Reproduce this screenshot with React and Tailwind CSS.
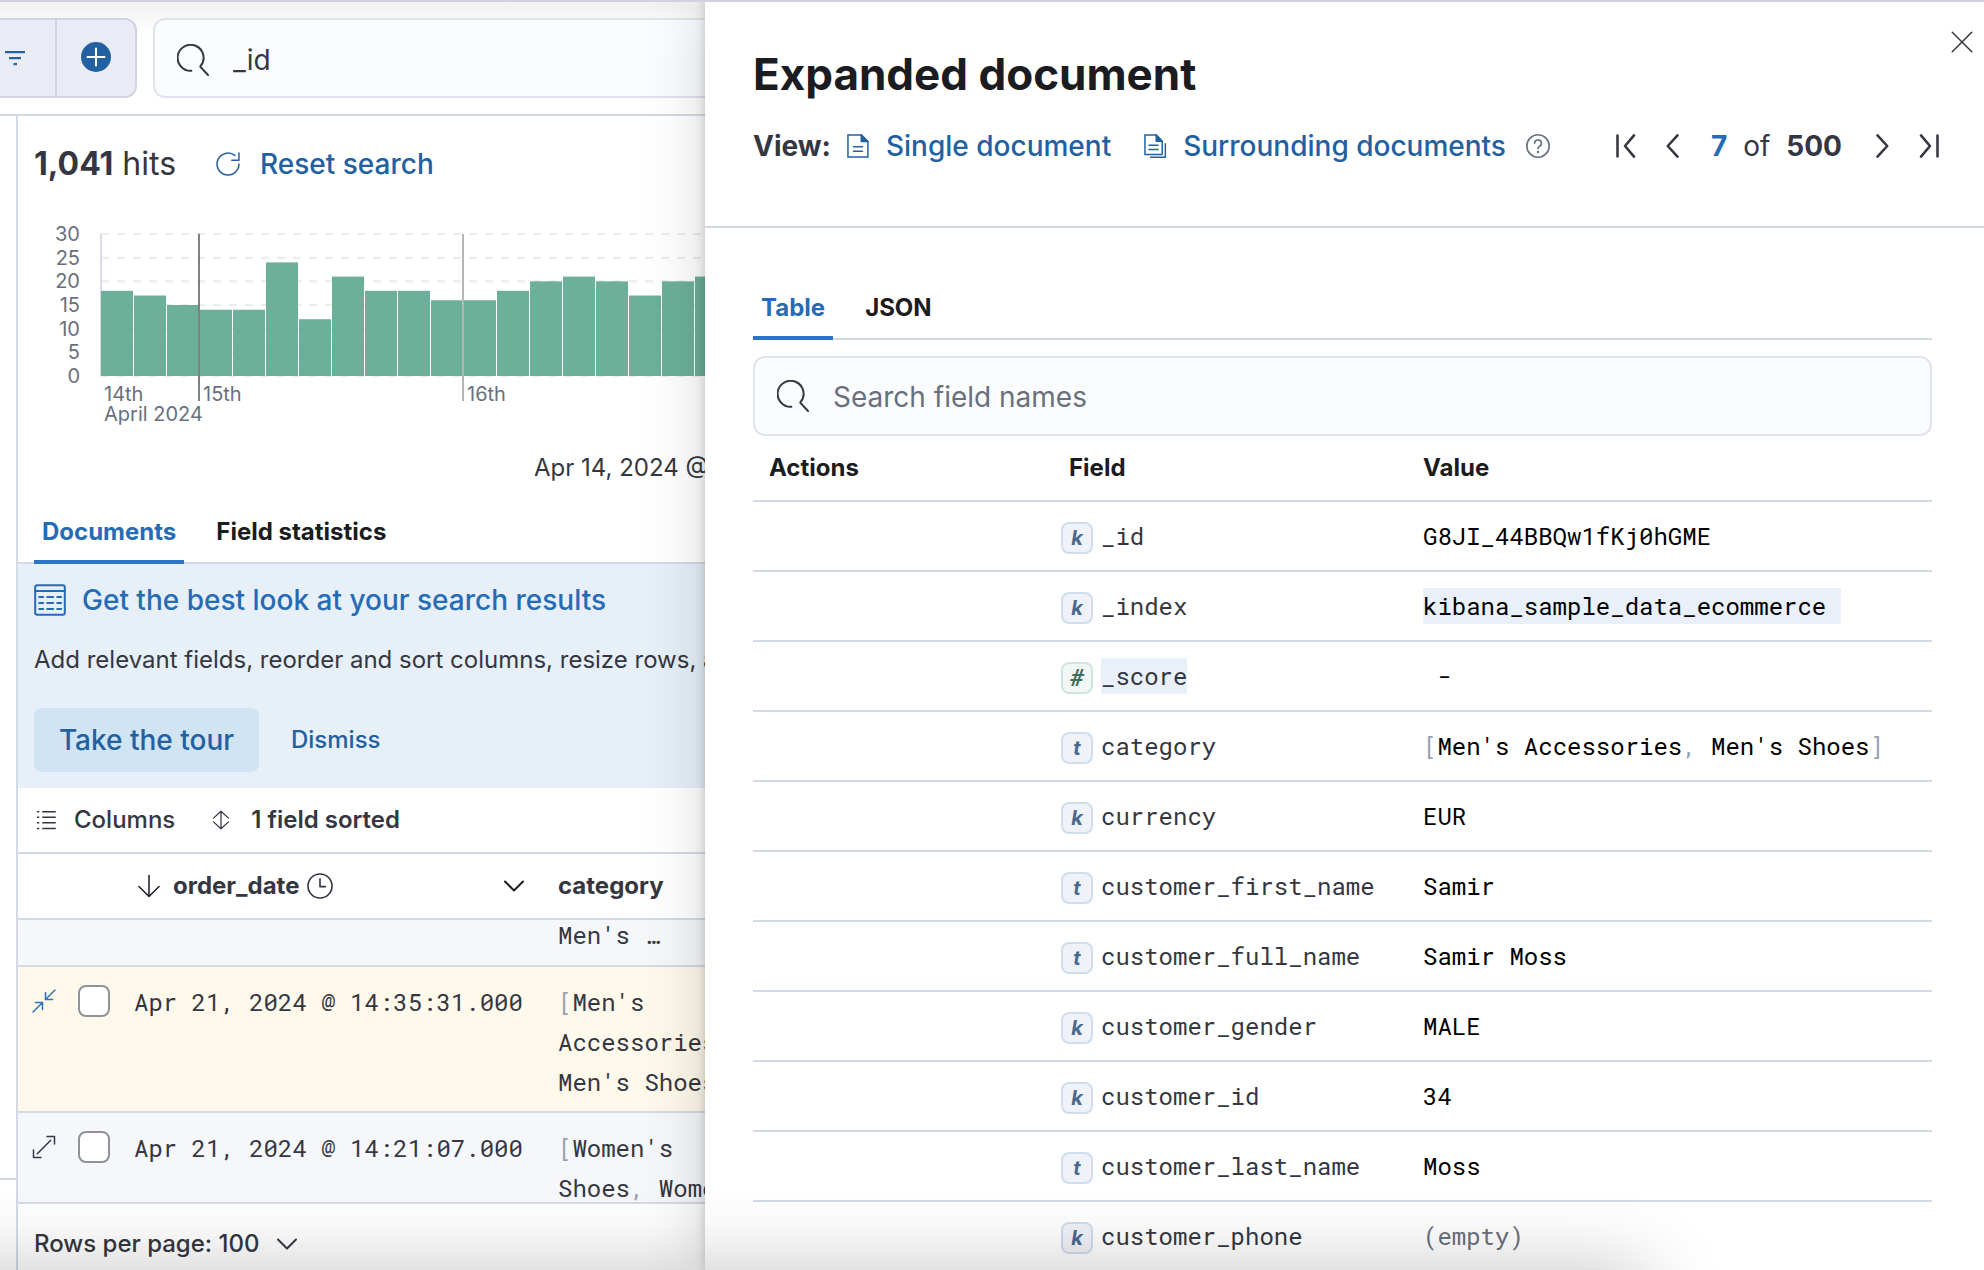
import React, { useState } from "react";
import clsx from "clsx";

const MONO = "font-['Roboto_Mono','Liberation_Mono',monospace]";

const BARS = [18, 17, 15, 14, 14, 24, 12, 21, 18, 18, 16, 16, 18, 20, 21, 20, 17, 20, 21, 19];
const TICKS = [30, 25, 20, 15, 10, 5, 0];

const FIELDS = [
  { type: "k", name: "_id", value: "G8JI_44BBQw1fKj0hGME" },
  { type: "k", name: "_index", value: "kibana_sample_data_ecommerce ", markValue: true },
  { type: "#", name: "_score", value: " -", markName: true },
  { type: "t", name: "category", value: ["Men's Accessories", "Men's Shoes"] },
  { type: "k", name: "currency", value: "EUR" },
  { type: "t", name: "customer_first_name", value: "Samir" },
  { type: "t", name: "customer_full_name", value: "Samir Moss" },
  { type: "k", name: "customer_gender", value: "MALE" },
  { type: "k", name: "customer_id", value: "34" },
  { type: "t", name: "customer_last_name", value: "Moss" },
  { type: "k", name: "customer_phone", value: null },
];

const Icon = ({ className, children, strokeWidth = 1, ...rest }) => (
  <svg
    viewBox="0 0 16 16"
    className={clsx("shrink-0", className)}
    fill="none"
    stroke="currentColor"
    strokeWidth={strokeWidth}
    strokeLinecap="round"
    strokeLinejoin="round"
    aria-hidden="true"
    {...rest}
  >
    {children}
  </svg>
);

const SearchIcon = () => (
  <Icon className="size-8 text-[#343741]">
    <path d="M7.2 13.4A6.5 6.5 0 1 1 11.6 11.3L15.5 15.5" />
  </Icon>
);

const ChevronDown = ({ className }) => (
  <Icon className={className} strokeWidth={1.3}>
    <path d="M2 5l6 6 6-6" />
  </Icon>
);

const DocumentIcon = () => (
  <Icon className="size-6">
    <path d="M1.3.6h8.9l4.4 4.4v10.4H1.3z" strokeLinejoin="miter" />
    <path d="M10.2.6V5h4.4z" fill="currentColor" />
    <path d="M5 8.5h6M5 11.5h6" />
  </Icon>
);

const DocumentsIcon = () => (
  <Icon className="size-6">
    <path d="M1.3.6h7.5l4 4.2v8.8H1.3z" strokeLinejoin="miter" />
    <path d="M8.8.6v4.2h4z" fill="currentColor" />
    <path d="M4 7.5h6M4 10.3h6" />
    <path d="M14.9 6.5v9H5" strokeLinejoin="miter" />
  </Icon>
);

const Punct = ({ children }) => <span className="text-[#98a2b3]">{children}</span>;

const ListValue = ({ items }) => (
  <>
    <Punct>[</Punct>
    {items.map((item, i) => (
      <React.Fragment key={item}>
        {i > 0 && <Punct>, </Punct>}
        {item}
      </React.Fragment>
    ))}
    <Punct>]</Punct>
  </>
);

const QueryBar = () => (
  <div className="flex h-[114px] shrink-0 items-center gap-4 border-b-2 border-[#d3dae6] bg-linear-to-b from-[#f1f1f1] to-white to-30%">
    <div className="flex h-20 w-[137px] shrink-0 overflow-hidden rounded-r-xl border-2 border-l-0 border-[#d0d4e5] bg-[#e9ecf4] text-[#2261a1]">
      <button aria-label="Filters" className="flex w-[57px] items-center border-r-2 border-[#d0d4e5]">
        <svg viewBox="0 0 24 24" className="ml-[3px] size-6" fill="currentColor">
          <rect x="2" y="5" width="20" height="2.2" />
          <rect x="6" y="11" width="12" height="2.2" />
          <rect x="10.5" y="17" width="3.5" height="2.2" />
        </svg>
      </button>
      <button aria-label="Add filter" className="flex flex-1 items-center justify-center pb-0.5">
        <svg viewBox="0 0 30 30" className="size-[30px]">
          <circle cx="15" cy="15" r="15" fill="currentColor" />
          <path d="M15 6.5v17M6.5 15h17" stroke="#fff" strokeWidth="2" strokeLinecap="round" />
        </svg>
      </button>
    </div>
    <label className="flex h-20 w-full items-center gap-6 rounded-l-xl border-2 border-r-0 border-[#dfe3ef] bg-[#fbfcfe] pt-1 pl-[22px]">
      <SearchIcon />
      <input
        aria-label="Query"
        defaultValue="_id"
        className="min-w-0 flex-1 bg-transparent text-[28px] text-[#343741] outline-none"
      />
    </label>
  </div>
);

const Histogram = () => {
  const y = (v) => 166 - (v * 142) / 30;
  return (
    <svg className="h-[220px] w-full shrink-0" role="img" aria-label="Hits over time">
      {TICKS.map((t) => (
        <g key={t}>
          <line x1="83" x2="700" y1={y(t)} y2={y(t)} stroke="#eaecf3" strokeWidth="2" strokeDasharray="8 8" />
          <text x="62" y={y(t) + 7} textAnchor="end" fontSize="20" fill="#69707d">
            {t}
          </text>
        </g>
      ))}
      <line x1="83" x2="83" y1="24" y2="166" stroke="#d9dce6" strokeWidth="2" />
      {BARS.map((v, i) => (
        <rect key={i} x={83 + i * 33} y={y(v)} width="32" height={166 - y(v)} fill="#6cb099" />
      ))}
      <line x1="181" x2="181" y1="24" y2="191" stroke="#808184" strokeWidth="2" />
      <line x1="445" x2="445" y1="24" y2="191" stroke="#b4b6b8" strokeWidth="2" />
      <g fontSize="20" fill="#69707d">
        <text x="86" y="191">14th</text>
        <text x="185" y="191">15th</text>
        <text x="449" y="191">16th</text>
        <text x="86" y="211">April 2024</text>
      </g>
    </svg>
  );
};

const Tab = ({ selected, onClick, children }) => (
  <button
    role="tab"
    aria-selected={selected}
    onClick={onClick}
    className={clsx(
      "border-b-4 px-2 text-2xl font-bold",
      selected ? "border-[#2b75c8] text-[#266bb5]" : "border-transparent text-[#1a1c21]"
    )}
  >
    {children}
  </button>
);

const TourCallout = () => (
  <section className="shrink-0 bg-[#e7f0f9] px-4 py-4 whitespace-nowrap">
    <h2 className="flex h-10 items-center gap-4 text-[28px] font-medium text-[#266bb5]">
      <Icon className="size-8">
        <rect x=".6" y=".6" width="14.8" height="14.8" rx="1" />
        <path d="M.6 3.5h14.8" />
        <path d="M2.6 6.5h2M6.6 6.5h3M11.6 6.5h2M2.6 9.5h2M6.6 9.5h3M11.6 9.5h2M2.6 12.5h2M6.6 12.5h3M11.6 12.5h2" />
      </Icon>
      Get the best look at your search results
    </h2>
    <p className="mt-5 text-2xl leading-10 text-[#343741]">
      Add relevant fields, reorder and sort columns, resize rows, and more
    </p>
    <div className="mt-7 flex items-center gap-8 font-medium text-[#2261a1]">
      <button className="h-16 w-[225px] rounded-lg bg-[#d1e4f3] text-[28px]">Take the tour</button>
      <button className="text-2xl">Dismiss</button>
    </div>
  </section>
);

const ROWS = [
  { date: "Apr 21, 2024 @ 14:35:31.000", category: ["Men's Accessories", "Men's Shoes"], open: true },
  { date: "Apr 21, 2024 @ 14:21:07.000", category: ["Women's Shoes", "Women's Clothing"], open: false },
];

const DocumentGrid = () => (
  <div className="min-h-0 flex-1 overflow-hidden">
    <table className="w-[762px] table-fixed border-separate border-spacing-0 text-left text-2xl text-[#343741]">
      <colgroup>
        <col className="w-[52px]" />
        <col className="w-12" />
        <col className="w-[424px]" />
        <col className="w-[238px]" />
      </colgroup>
      <thead>
        <tr className="h-[66px]">
          <th className="border-b-2 border-[#d3dae6]" />
          <th className="border-b-2 border-[#d3dae6]" />
          <th className="border-b-2 border-[#d3dae6] px-4 font-bold">
            <div className="flex items-center">
              <Icon className="ml-[3px] size-6 text-[#1a1c21]">
                <path d="M8 1v14M1.3 8.3L8 15l6.7-6.7" />
              </Icon>
              <span className="ml-3">order_date</span>
              <Icon className="ml-2 size-[26px]">
                <circle cx="8" cy="8" r="7.4" />
                <path d="M8 3.5V8.4h3.3" />
              </Icon>
              <ChevronDown className="ml-auto size-6 text-[#1a1c21]" />
            </div>
          </th>
          <th className="border-b-2 border-[#d3dae6] px-4 font-bold">category</th>
        </tr>
      </thead>
      <tbody className={MONO}>
        <tr className="h-[47px] bg-[#f5f7fb]">
          <td className="border-b-2 border-[#d3dae6]" />
          <td className="border-b-2 border-[#d3dae6]" />
          <td className="border-b-2 border-[#d3dae6]" />
          <td className="border-b-2 border-[#d3dae6] px-4 align-top leading-[30px]">Men's …</td>
        </tr>
        {ROWS.map((row) => (
          <tr key={row.date} className={clsx("align-top", row.open ? "bg-[#fff9eb]" : "bg-[#f5f7fb]")}>
            <td className="border-b-2 border-[#d3dae6] pt-[22px] pl-3.5">
              <button
                aria-label={row.open ? "Collapse row" : "Expand row"}
                className={clsx("block", row.open ? "text-[#2b75b5]" : "text-[#343741]")}
              >
                <Icon className="size-6">
                  {row.open ? (
                    <path d="M15.3.7L9 7M9 2.3V7h4.7M.7 15.3L7 9M2.3 9H7v4.7" />
                  ) : (
                    <path d="M3.5 12.5l9-9M10 1h5v5M1 10v5h5" />
                  )}
                </Icon>
              </button>
            </td>
            <td className="border-b-2 border-[#d3dae6] pt-[18px] pl-2">
              <input
                type="checkbox"
                aria-label={`Select ${row.date}`}
                className="block size-8 appearance-none rounded-lg border-2 border-[#909299] bg-white"
              />
            </td>
            <td className="border-b-2 border-[#d3dae6] px-4 pt-[15px] leading-10 whitespace-nowrap">{row.date}</td>
            <td className="border-b-2 border-[#d3dae6] px-4 pt-[15px] pb-[9px] leading-10">
              <ListValue items={row.category} />
            </td>
          </tr>
        ))}
      </tbody>
    </table>
  </div>
);

const DiscoverPane = () => {
  const [tab, setTab] = useState("Documents");
  return (
    <main className="flex min-w-0 flex-col overflow-hidden">
      <QueryBar />
      <div className="flex min-h-0 flex-1">
        <div className="flex w-[18px] shrink-0 flex-col justify-end border-r-2 border-[#d3dae6]">
          <div className="h-[92px] border-t-2 border-[#d3dae6]" />
        </div>
        <div className="flex min-w-0 flex-1 flex-col">
          <div className="flex h-[94px] shrink-0 items-center px-4 pt-0.5 text-[#343741]">
            <p className="text-[32px]">
              <strong className="font-bold">1,041</strong> hits
            </p>
            <button className="ml-10 flex items-center gap-5 text-[28px] font-medium text-[#2261a1]">
              <Icon className="size-6">
                <path d="M15.3 8A7.3 7.3 0 1 1 12.5 2.3M15.3.7v4.8h-4.8" />
              </Icon>
              Reset search
            </button>
          </div>
          <Histogram />
          <p className="h-[74px] shrink-0 pl-[516px] text-2xl leading-[76px] whitespace-nowrap text-[#343741]">
            Apr 14, 2024 @
          </p>
          <div role="tablist" className="flex h-[60px] shrink-0 gap-6 px-4 shadow-[inset_0_-2px_0_#d3dae6]">
            {["Documents", "Field statistics"].map((name) => (
              <Tab key={name} selected={tab === name} onClick={() => setTab(name)}>
                {name}
              </Tab>
            ))}
          </div>
          <TourCallout />
          <div className="flex h-[66px] shrink-0 items-center gap-9 border-b-2 border-[#d3dae6] px-4 text-2xl text-[#343741]">
            <button className="flex items-center gap-4 font-medium">
              <Icon className="size-6" strokeLinecap="butt">
                <path d="M2 2.5h1.5M5.5 2.5H14.5M2 6.2h1.5M5.5 6.2H14.5M2 9.9h1.5M5.5 9.9H14.5M2 13.6h1.5M5.5 13.6H14.5" />
              </Icon>
              Columns
            </button>
            <button className="flex items-center gap-5 font-semibold">
              <Icon className="size-5">
                <path d="M8 1v14M2 6.5L8 1l6 5.5M2 9.5L8 15l6-5.5" />
              </Icon>
              1 field sorted
            </button>
          </div>
          <DocumentGrid />
          <div className="flex h-[68px] shrink-0 items-center border-t-2 border-[#d3dae6] px-4 pt-3.5">
            <button className="flex items-center gap-4 text-2xl font-medium text-[#343741]">
              Rows per page: 100
              <ChevronDown className="size-6" />
            </button>
          </div>
        </div>
      </div>
    </main>
  );
};

const TypeBadge = ({ type }) => (
  <span
    className={clsx(
      "mt-1 flex size-8 shrink-0 items-center justify-center rounded-lg border-2 font-bold italic",
      type === "#"
        ? "border-[#cfe6dd] bg-[#f0f7f5] font-['Roboto',sans-serif] text-2xl text-[#3f6c5b]"
        : "border-[#d0dded] bg-[#eff2f8] font-['Inter',sans-serif] text-xl text-[#49698f]"
    )}
  >
    {type}
  </span>
);

const FieldTable = () => (
  <table className={clsx("w-full table-fixed border-separate border-spacing-0 text-left text-2xl", MONO)}>
    <thead className="font-['Inter',sans-serif] text-[#1a1c21]">
      <tr className="h-[66px]">
        <th className="w-[300px] border-b-2 border-[#d3dae6] px-4 font-bold">Actions</th>
        <th className="w-[354px] border-b-2 border-[#d3dae6] px-4 font-bold">Field</th>
        <th className="border-b-2 border-[#d3dae6] px-4 font-bold">Value</th>
      </tr>
    </thead>
    <tbody>
      {FIELDS.map((field) => (
        <tr key={field.name} className="h-[70px]">
          <td className="border-b-2 border-[#d3dae6]" />
          <td className="border-b-2 border-[#d3dae6] px-2 text-[#343741]">
            <div className="flex items-center gap-2">
              <TypeBadge type={field.type} />
              <span className={clsx("h-9 leading-9", field.markName && "bg-[#e9f0f9]")}>{field.name}</span>
            </div>
          </td>
          <td className="border-b-2 border-[#d3dae6] px-4 whitespace-pre text-black">
            {field.value === null ? (
              <span className="text-[#69707d]">(empty)</span>
            ) : Array.isArray(field.value) ? (
              <ListValue items={field.value} />
            ) : (
              <span className={clsx("inline-block h-9 leading-9 align-middle", field.markValue && "bg-[#e9f0f9]")}>
                {field.value}
              </span>
            )}
          </td>
        </tr>
      ))}
    </tbody>
  </table>
);

const Pager = () => (
  <nav aria-label="Document pages" className="ml-auto flex items-center text-[28px] text-[#343741]">
    <button aria-label="First">
      <Icon className="size-6" strokeWidth={1.7}>
        <path d="M3 1v14M14 .9L8 8l6 7.1" />
      </Icon>
    </button>
    <button aria-label="Previous" className="ml-6">
      <Icon className="size-6" strokeWidth={1.7}>
        <path d="M11 .9L4.5 8l6.5 7.1" />
      </Icon>
    </button>
    <span className="ml-[26px] font-bold text-[#266bb5]">7</span>
    <span className="ml-4">of</span>
    <span className="ml-4 font-bold">500</span>
    <button aria-label="Next" className="ml-7">
      <Icon className="size-6" strokeWidth={1.7}>
        <path d="M5 .9L11.5 8 5 15.1" />
      </Icon>
    </button>
    <button aria-label="Last" className="ml-6">
      <Icon className="size-6" strokeWidth={1.7}>
        <path d="M13 1v14M2 .9L8 8l-6 7.1" />
      </Icon>
    </button>
  </nav>
);

const DocumentFlyout = () => {
  const [tab, setTab] = useState("Table");
  return (
    <aside className="relative flex min-w-0 flex-col bg-white shadow-[0_0_10px_rgba(0,0,0,0.18),0_0_60px_rgba(0,0,0,0.16)]">
      <button aria-label="Close" className="absolute top-7 right-2.5 text-[#343741]">
        <Icon className="size-6">
          <path d="M1.5 1.5l13 13M14.5 1.5l-13 13" />
        </Icon>
      </button>
      <header className="h-[226px] shrink-0 border-b-2 border-[#d3dae6] pt-11 pr-[42px] pl-12">
        <h1 className="text-[44px] leading-[56px] font-bold text-[#1a1c21]">Expanded document</h1>
        <div className="mt-6 flex h-10 items-center text-[28px] whitespace-nowrap text-[#2261a1]">
          <span className="font-bold text-[#343741]">View:</span>
          <a href="#single" className="ml-[15px] flex items-center gap-4 font-medium">
            <DocumentIcon />
            Single document
          </a>
          <a href="#surrounding" className="ml-8 flex items-center gap-4 font-medium">
            <DocumentsIcon />
            Surrounding documents
          </a>
          <svg viewBox="0 0 24 24" className="ml-5 size-6 shrink-0" role="img" aria-label="Help">
            <circle cx="12" cy="12" r="11.2" fill="none" stroke="#69707d" strokeWidth="1.6" />
            <path
              d="M8.6 9.3a3.4 3.4 0 1 1 5 3c-1.1.6-1.6 1.2-1.6 2.5"
              fill="none"
              stroke="#69707d"
              strokeWidth="1.6"
              strokeLinecap="round"
            />
            <circle cx="12" cy="18" r="1.2" fill="#69707d" />
          </svg>
          <Pager />
        </div>
      </header>
      <div className="min-h-0 flex-1 overflow-hidden pt-[52px] pr-[52px] pl-12">
        <div role="tablist" className="flex h-[60px] gap-6 shadow-[inset_0_-2px_0_#d3dae6]">
          {["Table", "JSON"].map((name) => (
            <Tab key={name} selected={tab === name} onClick={() => setTab(name)}>
              {name}
            </Tab>
          ))}
        </div>
        <label className="mt-4 flex h-20 items-center gap-6 rounded-xl border-2 border-[#e0e4ef] bg-[#fbfcfe] px-[22px]">
          <SearchIcon />
          <input
            type="search"
            aria-label="Search field names"
            placeholder="Search field names"
            className="min-w-0 flex-1 bg-transparent pt-0.5 text-[28px] outline-none placeholder:text-[#69707d]"
          />
        </label>
        <FieldTable />
      </div>
    </aside>
  );
};

export default function App() {
  return (
    <div className="relative grid h-screen grid-cols-[705fr_1279fr] grid-rows-[minmax(0,1fr)] overflow-hidden border-t-2 border-[#cfd3df] bg-white font-['Inter',sans-serif]">
      <DiscoverPane />
      <DocumentFlyout />
      {/* soft shade rising from the bottom edge */}
      <div className="pointer-events-none absolute top-full left-0 -ml-20 h-20 w-[87%] shadow-[0_0_80px_rgba(0,0,0,0.24)]" />
    </div>
  );
}
